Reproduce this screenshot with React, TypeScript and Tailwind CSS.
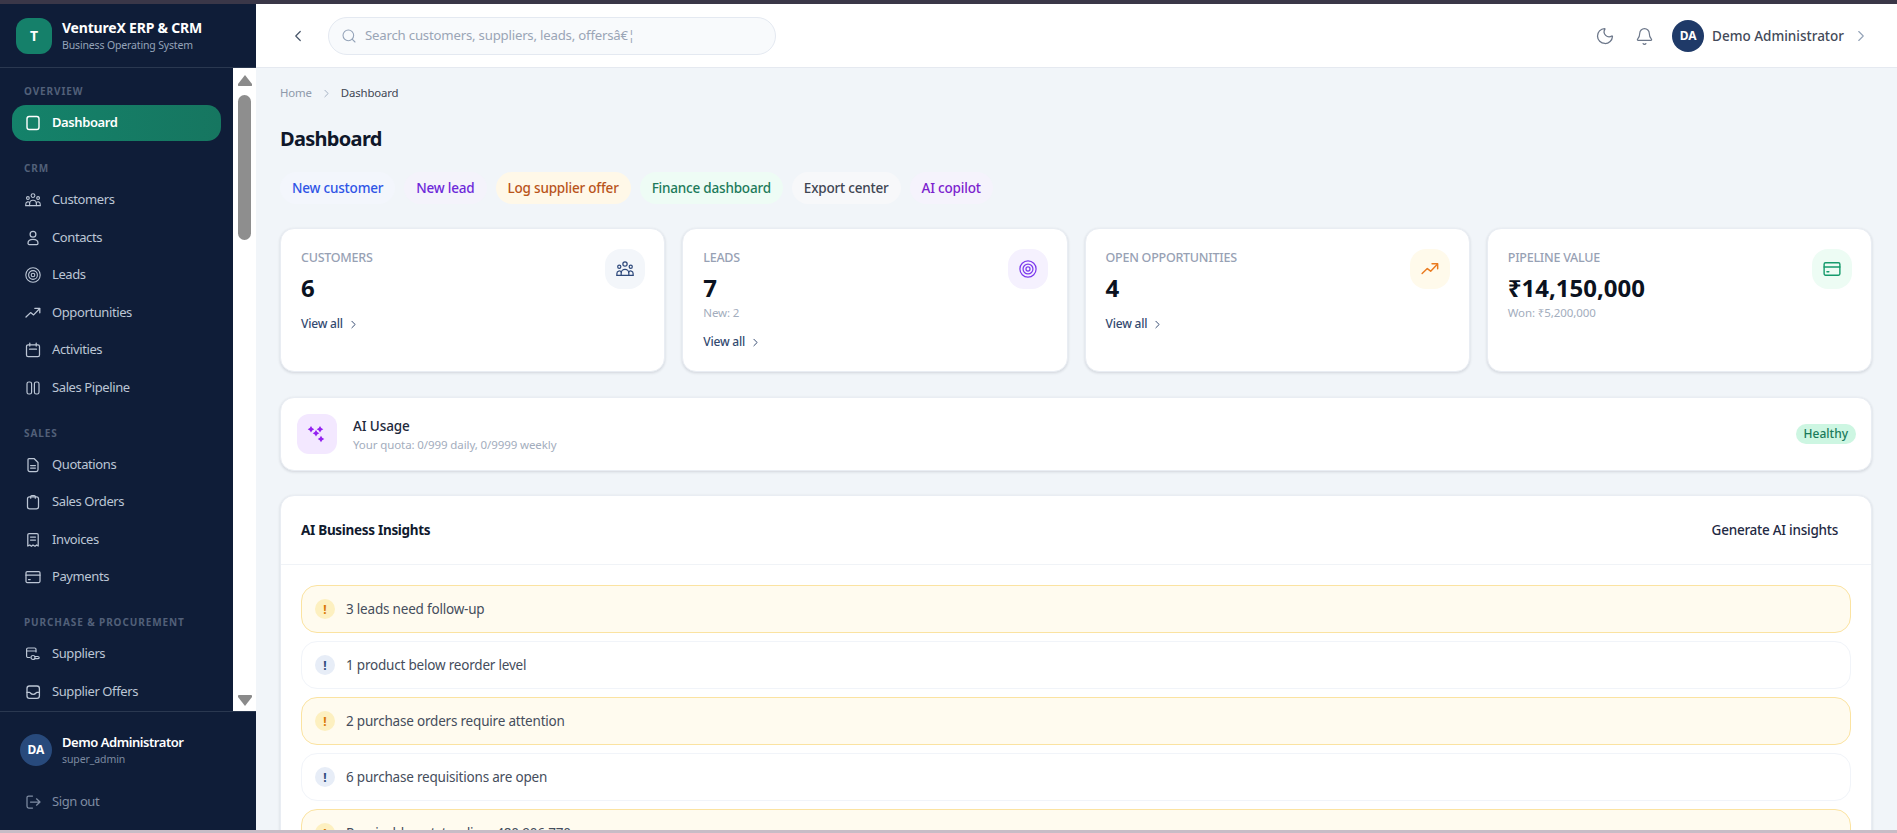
import React from "react";
import { ChevronLeft, ChevronRight, Search, Moon, Bell } from "lucide-react";

type IconProps = { className?: string };

const Ico = ({ className, children, sw = 1.25 }: IconProps & { children: React.ReactNode; sw?: number }) => (
  <svg
    viewBox="0 0 16 16"
    fill="none"
    stroke="currentColor"
    strokeWidth={sw}
    strokeLinecap="round"
    strokeLinejoin="round"
    className={className}
  >
    {children}
  </svg>
);

const SquareIcon = ({ className }: IconProps) => (
  <Ico className={className} sw={1.4}>
    <rect x="2" y="1.5" width="12" height="13" rx="2.2" />
  </Ico>
);

const GroupIcon = ({ className }: IconProps) => (
  <Ico className={className} sw={1.1}>
    <circle cx="8" cy="3.6" r="1.9" />
    <circle cx="2.9" cy="6" r="1.4" />
    <circle cx="13.1" cy="6" r="1.4" />
    <path d="M.8 13.6h14.4" />
    <path d="M4.6 13.6v-1.9a3.4 3.4 0 0 1 6.8 0v1.9" />
    <path d="M.8 13.6v-1.7a2.1 2.1 0 0 1 4-.9" />
    <path d="M15.2 13.6v-1.7a2.1 2.1 0 0 0-4-.9" />
  </Ico>
);

const UserIcon = ({ className }: IconProps) => (
  <Ico className={className}>
    <circle cx="8" cy="4.3" r="2.9" />
    <path d="M3 13.2c0-2.5 2.2-3.9 5-3.9s5 1.4 5 3.9c0 .8-.5 1.3-1.2 1.3H4.2C3.5 14.5 3 14 3 13.2z" />
  </Ico>
);

const TargetIcon = ({ className }: IconProps) => (
  <Ico className={className} sw={1.1}>
    <circle cx="8" cy="8" r="7.2" />
    <circle cx="8" cy="8" r="4.4" />
    <circle cx="8" cy="8" r="1.8" />
  </Ico>
);

const TrendIcon = ({ className }: IconProps) => (
  <Ico className={className} sw={1.3}>
    <path d="M1 12l4.6-4.4 3 2.3L14.5 3.8" />
    <path d="M9.8 3.3h5v4.5" />
  </Ico>
);

const CalendarIcon = ({ className }: IconProps) => (
  <Ico className={className}>
    <rect x="1.5" y="2.8" width="13" height="11.7" rx="1.6" />
    <path d="M4.8 1v3M11.2 1v3M4.5 7.2h7" />
  </Ico>
);

const PipelineIcon = ({ className }: IconProps) => (
  <Ico className={className} sw={1.2}>
    <rect x="2" y="2" width="4.6" height="12" rx="1.8" />
    <rect x="9.4" y="2" width="4.6" height="12" rx="1.8" />
  </Ico>
);

const DocIcon = ({ className }: IconProps) => (
  <Ico className={className}>
    <path d="M4 1.500h5l4 4v7.300a1.700 1.700 0 0 1-1.700 1.700H4.700A1.700 1.700 0 0 1 3 12.800V2.500a1 1 0 0 1 1-1z" />
    <path d="M5.600 8.500h4.800M5.600 11h4.800" />
  </Ico>
);

const ClipboardIcon = ({ className }: IconProps) => (
  <Ico className={className}>
    <rect x="2.500" y="2.800" width="11" height="12" rx="2" />
    <path d="M5.700 4.200V2.500c0-.6.400-1 1-1h2.600c.6 0 1 .4 1 1v1.700" />
  </Ico>
);

const ReceiptIcon = ({ className }: IconProps) => (
  <Ico className={className}>
    <path d="M2.800 14V2.800c0-.8.500-1.300 1.300-1.300h7.800c.8 0 1.300.500 1.300 1.300V14l-1.600-1-1.600 1.300L8 13l-1.600 1.300L4.800 13z" />
    <path d="M5.500 5h5M5.500 8h5" />
  </Ico>
);

const CardIcon = ({ className }: IconProps) => (
  <Ico className={className}>
    <rect x="1" y="2.500" width="14" height="11" rx="1.200" />
    <path d="M1 6.200h14M3.500 10.500h1.700" />
  </Ico>
);

const SupplierIcon = ({ className }: IconProps) => (
  <Ico className={className} sw={1.2}>
    <path d="M4.800 11.500H3a1.400 1.400 0 0 1-1.400-1.400V3.400A1.400 1.400 0 0 1 3 2h6.600A1.400 1.400 0 0 1 11 3.400V6" />
    <path d="M1.800 5h9" />
    <circle cx="8" cy="11.500" r="2" />
    <path d="M10 10.500h2.600c.9 0 1.600.5 1.600 1.200s-.7 1-1.600 1H10" />
  </Ico>
);

const OffersIcon = ({ className }: IconProps) => (
  <Ico className={className} sw={1.3}>
    <rect x="2" y="2" width="12.400" height="12.400" rx="2.400" />
    <path d="M2 8.400h2.600c.8 0 1 1.900 3.600 1.900s2.800-1.900 3.600-1.900h2.600" />
  </Ico>
);

const SignOutIcon = ({ className }: IconProps) => (
  <Ico className={className}>
    <path d="M7.500 14H3.700a1.700 1.700 0 0 1-1.700-1.700V3.700A1.700 1.700 0 0 1 3.700 2h3.800" />
    <path d="M5.500 8h9.500M11.500 4.800L15 8l-3.500 3.200" />
  </Ico>
);

const SparkIcon = ({ className }: IconProps) => (
  <svg viewBox="0 0 20 20" fill="currentColor" className={className}>
    <path d="M4 2l1.200 2.100 2.100 1.200-2.100 1.200L4 8.600 2.800 6.500.7 5.300l2.100-1.200z" />
    <path d="M13 2l1.200 2.100 2.100 1.200-2.100 1.200L13 8.600l-1.200-2.100-2.100-1.200 2.100-1.200z" />
    <path d="M9 6l1.200 2.100 2.100 1.200-2.100 1.200L9 12.600l-1.200-2.100-2.100-1.200 2.100-1.200z" />
    <path d="M14 11.700l1.200 2.100 2.100 1.200-2.100 1.200-1.200 2.100-1.200-2.100-2.100-1.200 2.100-1.200z" />
  </svg>
);

type NavItem = { label: string; icon: React.ComponentType<IconProps>; active?: boolean };

const sections: { title: string; items: NavItem[] }[] = [
  { title: "OVERVIEW", items: [{ label: "Dashboard", icon: SquareIcon, active: true }] },
  {
    title: "CRM",
    items: [
      { label: "Customers", icon: GroupIcon },
      { label: "Contacts", icon: UserIcon },
      { label: "Leads", icon: TargetIcon },
      { label: "Opportunities", icon: TrendIcon },
      { label: "Activities", icon: CalendarIcon },
      { label: "Sales Pipeline", icon: PipelineIcon },
    ],
  },
  {
    title: "SALES",
    items: [
      { label: "Quotations", icon: DocIcon },
      { label: "Sales Orders", icon: ClipboardIcon },
      { label: "Invoices", icon: ReceiptIcon },
      { label: "Payments", icon: CardIcon },
    ],
  },
  {
    title: "PURCHASE & PROCUREMENT",
    items: [
      { label: "Suppliers", icon: SupplierIcon },
      { label: "Supplier Offers", icon: OffersIcon },
    ],
  },
];

const Sidebar = () => (
  <aside className="w-[256px] shrink-0 flex flex-col bg-[#0f1d38]">
    <div className="h-[64px] shrink-0 flex items-center gap-[10px] px-4 border-b border-[#2a3850]">
      <div className="size-9 rounded-[12px] bg-[#15806a] text-white flex items-center justify-center text-sm font-bold">
        T
      </div>
      <div className="flex flex-col">
        <span className="text-[14px] leading-[18px] font-bold text-white tracking-[-0.2px]">VentureX ERP &amp; CRM</span>
        <span className="mt-px text-[10.5px] leading-[14px] text-[#94a3b8] tracking-[-0.15px]">Business Operating System</span>
      </div>
    </div>
    <div className="flex-1 flex min-h-0">
      <nav className="w-[233px] px-3 pt-4 overflow-hidden">
        {sections.map((s) => (
          <div key={s.title} className="mb-5">
            <div className="h-[14px] px-3 mb-[7px] text-[10px] leading-[14px] font-bold tracking-[0.9px] text-[#526079]">
              {s.title}
            </div>
            <div className="flex flex-col gap-[1.5px]">
              {s.items.map((it) => (
                <div
                  key={it.label}
                  className={
                    it.active
                      ? "h-9 rounded-[14px] bg-gradient-to-r from-[#14826a] to-[#167660] px-[13px] flex items-center gap-[11px] text-[13px] font-semibold text-white tracking-[-0.4px]"
                      : "h-9 rounded-[14px] px-[13px] flex items-center gap-[11px] text-[13px] text-[#bcc6d5] tracking-[-0.4px]"
                  }
                >
                  <it.icon className="size-4 shrink-0" />
                  <span>{it.label}</span>
                </div>
              ))}
            </div>
          </div>
        ))}
      </nav>
      {/* browser scrollbar */}
      <div className="w-[23px] bg-white flex flex-col items-center pt-[7px] pb-[5px]">
        <svg viewBox="0 0 14 11" className="w-[14px] h-[11px] text-[#8a8a8a]" fill="currentColor">
          <path d="M7 0l7 9q.5 2-1 2H1q-1.500 0-1-2z" />
        </svg>
        <div className="w-[13px] h-[145px] mt-[9px] rounded-full bg-[#8e8e8e]" />
        <div className="flex-1" />
        <svg viewBox="0 0 14 11" className="w-[14px] h-[11px] text-[#8a8a8a]" fill="currentColor">
          <path d="M7 11L0 2q-.5-2 1-2h12q1.500 0 1 2z" />
        </svg>
      </div>
    </div>
    <div className="h-[119px] shrink-0 border-t border-[#2a3850] px-5 pt-[22px]">
      <div className="flex items-center gap-[10px] h-8">
        <div className="size-8 rounded-full bg-[#284a7c] text-white flex items-center justify-center text-xs font-bold">
          DA
        </div>
        <div className="flex flex-col">
          <span className="text-[13px] leading-[17px] font-semibold text-white tracking-[-0.45px]">Demo Administrator</span>
          <span className="mt-px text-[10.5px] leading-[14px] text-[#7c8aa0] tracking-[-0.1px]">super_admin</span>
        </div>
      </div>
      <div className="flex items-center gap-[11px] mt-[18px] ml-[5px] text-[13px] text-[#7f8ca2] tracking-[-0.4px] h-9">
        <SignOutIcon className="size-4" />
        <span>Sign out</span>
      </div>
    </div>
  </aside>
);

const Header = () => (
  <header className="h-[64px] shrink-0 pt-px bg-white border-b border-[#e5e9f0] flex items-center pl-[33px] pr-[27px]">
    <ChevronLeft className="size-[18px] text-[#475569]" strokeWidth={1.6} />
    <div className="ml-[21px] w-[448px] h-[38px] rounded-full border border-[#e4e9f1] bg-[#f8fafc] flex items-center px-[12px] gap-[8px]">
      <Search className="size-4 text-[#94a3b8]" strokeWidth={1.6} />
      <span className="text-[13.2px] text-[#9aa5b6] tracking-[-0.2px]">Search customers, suppliers, leads, offersâ€¦</span>
    </div>
    <div className="flex-1" />
    <Moon className="size-5 text-[#6b7689]" strokeWidth={1.5} />
    <Bell className="size-[19px] text-[#6b7689] ml-[20px]" strokeWidth={1.5} />
    <div className="size-8 ml-[18px] rounded-full bg-[#1f3a68] text-white flex items-center justify-center text-xs font-bold">
      DA
    </div>
    <span className="ml-[8px] text-[13.5px] font-medium text-[#434a59]">Demo Administrator</span>
    <ChevronRight className="size-[18px] ml-[8px] text-[#94a3b8]" strokeWidth={1.5} />
  </header>
);

const chips = [
  { label: "New customer", cls: "text-[#2f55e6] bg-[#f3f6fc]" },
  { label: "New lead", cls: "text-[#6d28d9] bg-[#f4f3fb]" },
  { label: "Log supplier offer", cls: "text-[#b9541a] bg-[#fff8e8]" },
  { label: "Finance dashboard", cls: "text-[#1c7a5a] bg-[#eefcf5]" },
  { label: "Export center", cls: "text-[#3f4653] bg-[#f7f8fa]" },
  { label: "AI copilot", cls: "text-[#7c22ce] bg-[#f5f3fc]" },
];

const stats = [
  { label: "CUSTOMERS", value: "6", link: true, icon: GroupIcon, tile: "bg-[#f3f6fa] text-[#2f4a7c]" },
  { label: "LEADS", value: "7", sub: "New: 2", link: true, icon: TargetIcon, tile: "bg-[#f5f1fe] text-[#7c3aed]" },
  { label: "OPEN OPPORTUNITIES", value: "4", link: true, icon: TrendIcon, tile: "bg-[#fffaeb] text-[#ea7a1f]" },
  { label: "PIPELINE VALUE", value: "₹14,150,000", sub: "Won: ₹5,200,000", link: false, icon: CardIcon, tile: "bg-[#edfcf4] text-[#159a6c]" },
];

const insights = [
  { text: "3 leads need follow-up", warn: true },
  { text: "1 product below reorder level", warn: false },
  { text: "2 purchase orders require attention", warn: true },
  { text: "6 purchase requisitions are open", warn: false },
  { text: "Receivable outstanding: 480,906,770", warn: true },
];

export default function App() {
  return (
    <div className="h-screen w-full flex flex-col overflow-hidden font-['Noto_Sans',sans-serif]">
      <div className="h-[4px] shrink-0 bg-[#3a3748]" />
      <div className="flex-1 min-h-0 flex">
        <Sidebar />
        <div className="flex-1 min-w-0 flex flex-col bg-[#f1f5f9]">
          <Header />
          <main className="flex-1 min-h-0 overflow-hidden pl-[24px] pr-[25px] pt-[16px]">
            <div className="flex items-center gap-2 h-[18px] text-[11.4px] tracking-[-0.15px]">
              <span className="text-[#8e99aa]">Home</span>
              <ChevronRight className="size-[13px] text-[#94a3b8]" strokeWidth={1.5} />
              <span className="text-[#3f4653]">Dashboard</span>
            </div>
            <h1 className="mt-[23px] h-[28px] text-[20px] leading-[28px] font-bold text-[#0f172a] tracking-[-0.7px]">Dashboard</h1>
            <div className="mt-[19px] flex gap-[9px]">
              {chips.map((c) => (
                <span key={c.label} className={"h-8 px-3 rounded-full flex items-center text-[13.5px] font-medium tracking-[-0.2px] " + c.cls}>
                  {c.label}
                </span>
              ))}
            </div>
            <div className="mt-[24px] grid grid-cols-4 gap-[17px]">
              {stats.map((s) => (
                <div key={s.label} className="h-[144px] rounded-[14px] bg-white border border-[#e9edf3] shadow-[0_1px_3px_rgba(15,23,42,0.14)] py-5 pl-5 pr-[19px] flex justify-between">
                  <div className="flex flex-col items-start">
                    <span className="text-[12.5px] leading-[18px] font-medium text-[#97a1b4] tracking-[-0.25px]">{s.label}</span>
                    <span className="mt-[5px] text-[24px] leading-[32px] font-bold text-[#0b1220]">{s.value}</span>
                    {s.sub && <span className="text-[11.5px] leading-[16px] mt-[1px] text-[#a3adbd] tracking-[-0.1px]">{s.sub}</span>}
                    {s.link && (
                      <span className={(s.sub ? "mt-[12px]" : "mt-[11px]") + " flex items-center gap-[4px] text-[12px] leading-[18px] font-medium text-[#334a70] tracking-[-0.2px]"}>
                        View all
                        <ChevronRight className="size-[13px]" strokeWidth={1.8} />
                      </span>
                    )}
                  </div>
                  <div className={"size-10 rounded-[16px] flex items-center justify-center " + s.tile}>
                    <s.icon className="size-[18px]" />
                  </div>
                </div>
              ))}
            </div>
            <div className="mt-[25px] h-[74px] rounded-[14px] bg-white border border-[#e9edf3] shadow-[0_1px_3px_rgba(15,23,42,0.14)] pl-4 pr-[15px] flex items-center">
              <div className="size-10 rounded-[12px] bg-[#f3e8ff] flex items-center justify-center">
                <SparkIcon className="size-5 text-[#9321f0]" />
              </div>
              <div className="ml-4 flex flex-col flex-1">
                <span className="text-[13.5px] leading-[20px] font-medium text-[#1e293b] tracking-[-0.1px]">AI Usage</span>
                <span className="mt-px text-[11.5px] leading-[16px] text-[#a3adbd] tracking-[-0.1px]">Your quota: 0/999 daily, 0/9999 weekly</span>
              </div>
              <span className="h-5 px-[8px] rounded-full bg-[#cdf6e2] text-[#1a7a5a] text-[12px] font-medium flex items-center">Healthy</span>
            </div>
            <div className="mt-[24px] rounded-[14px] bg-white border border-[#e9edf3] shadow-[0_1px_3px_rgba(15,23,42,0.14)]">
              <div className="h-[69px] px-5 flex items-center justify-between border-b border-[#f0f3f7]">
                <span className="text-[13.5px] font-bold text-[#111a2e] tracking-[-0.3px]">AI Business Insights</span>
                <span className="mr-[13px] text-[13.5px] font-medium text-[#1f2a44] tracking-[-0.25px]">Generate AI insights</span>
              </div>
              <div className="p-5 flex flex-col gap-2">
                {insights.map((r) => (
                  <div
                    key={r.text}
                    className={
                      r.warn
                        ? "h-12 rounded-[16px] border border-[#fbe3a1] bg-[#fffbef] px-[13px] flex items-center gap-[11px]"
                        : "h-12 rounded-[16px] border border-[#f1f4f9] bg-white px-[13px] flex items-center gap-[11px]"
                    }
                  >
                    <span
                      className={
                        r.warn
                          ? "size-5 pt-[2px] rounded-full bg-[#fdf0c0] text-[#d97706] text-[12px] font-bold flex items-center justify-center"
                          : "size-5 pt-[2px] rounded-full bg-[#e7edf7] text-[#2f4a7c] text-[12px] font-bold flex items-center justify-center"
                      }
                    >
                      !
                    </span>
                    <span className="text-[13.5px] text-[#454d5c] tracking-[-0.2px]">{r.text}</span>
                  </div>
                ))}
              </div>
            </div>
          </main>
        </div>
      </div>
      <div className="h-[3px] shrink-0 bg-[#c8bcc6]" />
    </div>
  );
}
